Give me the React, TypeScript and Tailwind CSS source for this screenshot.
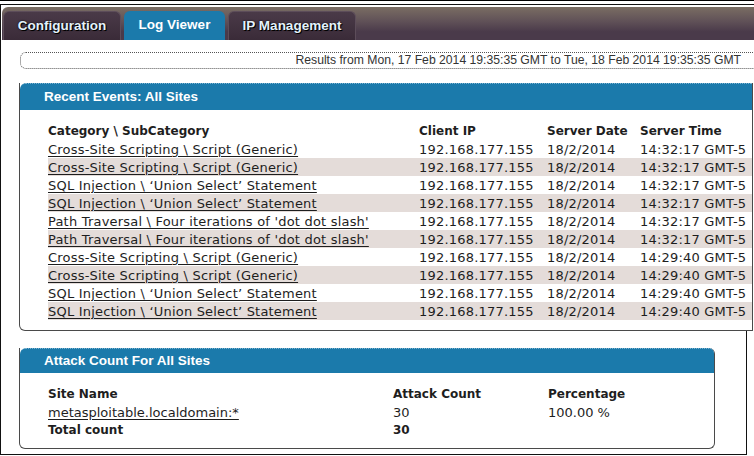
import React from "react"

const events = [
  ["Cross-Site Scripting \\ Script (Generic)", "14:32:17 GMT-5"],
  ["Cross-Site Scripting \\ Script (Generic)", "14:32:17 GMT-5"],
  ["SQL Injection \\ \u2018Union Select\u2019 Statement", "14:32:17 GMT-5"],
  ["SQL Injection \\ \u2018Union Select\u2019 Statement", "14:32:17 GMT-5"],
  ["Path Traversal \\ Four iterations of 'dot dot slash'", "14:32:17 GMT-5"],
  ["Path Traversal \\ Four iterations of 'dot dot slash'", "14:32:17 GMT-5"],
  ["Cross-Site Scripting \\ Script (Generic)", "14:29:40 GMT-5"],
  ["Cross-Site Scripting \\ Script (Generic)", "14:29:40 GMT-5"],
  ["SQL Injection \\ \u2018Union Select\u2019 Statement", "14:29:40 GMT-5"],
  ["SQL Injection \\ \u2018Union Select\u2019 Statement", "14:29:40 GMT-5"],
]

function Tab({ label, active, width }: { label: string; active?: boolean; width: string }) {
  return (
    <div
      className={`${width} h-[29px] rounded-t-[6px] flex items-center justify-center font-['Liberation_Sans',Arial,sans-serif] font-bold text-[13.5px] ${
        active
          ? "bg-[#1b7aab] text-white"
          : "bg-[linear-gradient(to_bottom,#4a3a48,#3a2b38)] border border-b-0 border-[#5d4d5a] text-[#e4f2fb] [text-shadow:0_0_2px_#000,1px_1px_0_#000]"
      }`}
    >
      {label}
    </div>
  )
}

function PanelHeader({ title, h }: { title: string; h: string }) {
  return (
    <div
      className={`${h} bg-[#1b7aab] border-t border-dotted border-[#7fb3cf] rounded-tl-[6px] flex items-center pl-[24px] font-['Liberation_Sans',Arial,sans-serif] font-bold text-[13.5px] text-white`}
    >
      {title}
    </div>
  )
}

export default function App() {
  return (
    <div className="w-[754px] h-[456px] bg-white overflow-hidden text-[#1e1e1e]">
      <div className="h-[4px] border-t border-black" />
      <div className="h-[451px] border-l border-t border-[#111] flex flex-col">
        {/* Tab bar */}
        <div className="mt-[2px] ml-[1px] w-[760px] h-[33px] rounded-tl-[6px] bg-[linear-gradient(to_bottom,#7a6d63,#5f5057_45%,#4a3a4a_75%)] flex items-end gap-[3px] pl-[1px]">
          <Tab label="Configuration" width="w-[118px]" />
          <Tab label="Log Viewer" width="w-[101px]" active />
          <Tab label="IP Management" width="w-[128px]" />
        </div>

        {/* Results range */}
        <div className="mt-[12px] ml-[19px] w-[745px] h-[17px] rounded-[6px] border border-dotted border-[#555] bg-white flex items-center justify-end pr-[23px] font-['Liberation_Sans',Arial,sans-serif] text-[12.2px] text-[#333]">
          Results from Mon, 17 Feb 2014 19:35:35 GMT to Tue, 18 Feb 2014 19:35:35 GMT
        </div>

        {/* Recent events */}
        <div className="mt-[14px] ml-[18px] w-[734px] h-[248px] border-l border-r border-b border-[#4a4a4a] rounded-bl-[6px] bg-white flex flex-col">
          <PanelHeader title="Recent Events: All Sites" h="h-[27px]" />
          <div className="pt-[12px] pl-[28px] font-['DejaVu_Sans',Verdana,sans-serif] text-[13px] tracking-[0.2px]">
            <div className="grid grid-cols-[371px_128px_93px_1fr] h-[18px] items-center font-bold text-[12px] tracking-normal">
              <span>Category \ SubCategory</span>
              <span>Client IP</span>
              <span>Server Date</span>
              <span>Server Time</span>
            </div>
            {events.map(([cat, time], i) => (
              <div
                key={i}
                className={`grid grid-cols-[371px_128px_93px_1fr] h-[18px] items-center whitespace-nowrap ${
                  i % 2 === 1 ? "bg-[#e4dcd9]" : ""
                }`}
              >
                <a className="underline underline-offset-2 text-[#1e1e1e]">{cat}</a>
                <span>192.168.177.155</span>
                <span>18/2/2014</span>
                <span>{time}</span>
              </div>
            ))}
          </div>
        </div>

        {/* Attack count */}
        <div className="w-[746px] flex-1 border-r border-b border-[#111] pt-[17px]">
          <div className="ml-[18px] w-[696px] h-[101px] border-l border-r border-b border-[#4a4a4a] rounded-b-[6px] rounded-tr-[6px] flex flex-col">
            <PanelHeader title="Attack Count For All Sites" h="h-[25px] rounded-tr-[5px]" />
            <div className="pt-[12px] pl-[28px] font-['DejaVu_Sans',Verdana,sans-serif] text-[13px]">
              <div className="grid grid-cols-[345px_155px_1fr] h-[18px] items-center font-bold text-[12px]">
                <span>Site Name</span>
                <span>Attack Count</span>
                <span>Percentage</span>
              </div>
              <div className="grid grid-cols-[345px_155px_1fr] h-[18px] items-center">
                <a className="underline underline-offset-2">metasploitable.localdomain:*</a>
                <span>30</span>
                <span>100.00 %</span>
              </div>
              <div className="grid grid-cols-[345px_155px_1fr] h-[18px] items-center font-bold text-[12px]">
                <span>Total count</span>
                <span>30</span>
                <span />
              </div>
            </div>
          </div>
        </div>
      </div>
    </div>
  )
}
